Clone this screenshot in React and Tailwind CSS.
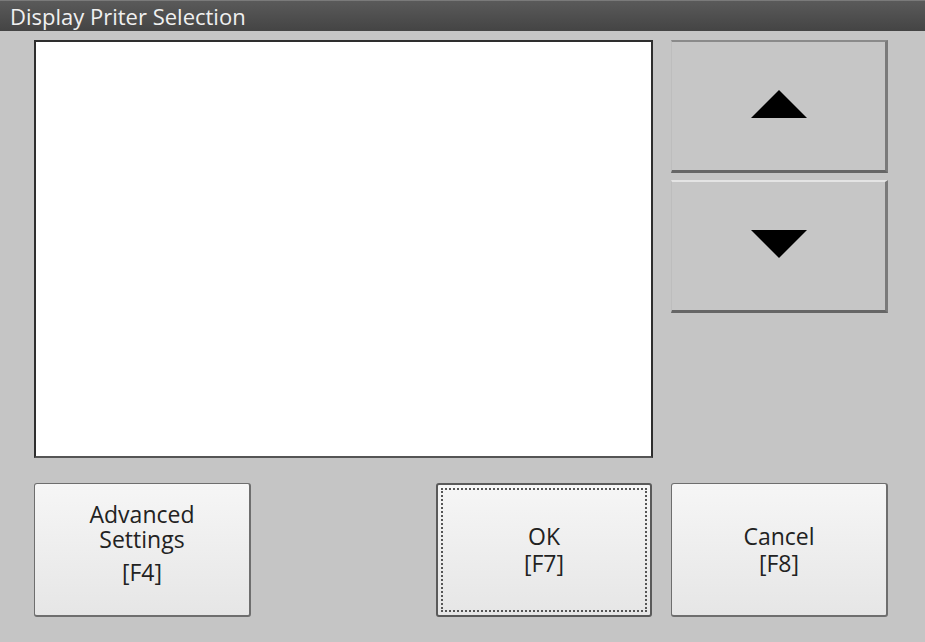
import React from "react";

const FONT = { fontFamily: '"Open Sans", "Noto Sans", sans-serif' };

function ScrollButton({ dir, topLine }) {
  return (
    <button
      className={`flex h-[133px] w-full items-center justify-center border-l border-l-[#bdbdbd] border-r-[3px] border-r-[#7a7a7a] border-b-[3px] border-b-[#666] border-t-2 bg-[#c6c6c6] ${topLine}`}
    >
      <svg width="56" height="28" viewBox="0 0 56 28" className="-translate-y-[2px]">
        {dir === "up" ? (
          <polygon points="28,0 56,28 0,28" fill="#000" />
        ) : (
          <polygon points="0,0 56,0 28,28" fill="#000" />
        )}
      </svg>
    </button>
  );
}

function FaceButton({ children, focused, className = "" }) {
  return (
    <button
      className={`relative flex h-[134px] items-center justify-center rounded-[3px] bg-gradient-to-b from-[#f6f6f6] to-[#e6e6e6] text-[23px] text-[#222] ${
        focused ? "border-2 border-[#5a5a5a]" : "border border-[#6e6e6e] border-b-2 border-r-2"
      } ${className}`}
    >
      {focused && (
        <span className="pointer-events-none absolute inset-[3px] border-2 border-dotted border-[#555]" />
      )}
      {children}
    </button>
  );
}

export default function App() {
  return (
    <div className="flex h-[642px] w-[925px] flex-col bg-[#c5c5c5]" style={FONT}>
      {/* title bar */}
      <div className="flex h-[31px] items-center border-t border-t-[#7a7a7a] bg-gradient-to-b from-[#5a5a5a] to-[#444] pl-[10px]">
        <span className="text-[22px] leading-none text-[#f0f0f0]">Display Priter Selection</span>
      </div>

      <div className="flex flex-col pl-[34px] pr-[37px] pt-[9px]">
        <div className="flex gap-[18px]">
          <div className="h-[418px] w-[619px] border-2 border-[#2e2e2e] border-b-[#555] bg-white" />
          <div className="flex w-[217px] flex-col gap-[7px]">
            <ScrollButton dir="up" topLine="border-t-[#8a8a8a]" />
            <ScrollButton dir="down" topLine="border-t-[#e4e4e4]" />
          </div>
        </div>

        <div className="mt-[25px] flex">
          <FaceButton className="w-[217px]">
            <div className="flex -translate-y-[6px] flex-col items-center text-center">
              <p className="whitespace-pre-line leading-[25px]">{"Advanced\nSettings"}</p>
              <p className="mt-[8px] leading-[25px]">[F4]</p>
            </div>
          </FaceButton>
          <FaceButton focused className="ml-auto w-[216px]">
            <p className="whitespace-pre-line text-center leading-[27px]">{"OK\n[F7]"}</p>
          </FaceButton>
          <FaceButton className="ml-[19px] w-[217px]">
            <p className="whitespace-pre-line text-center leading-[27px]">{"Cancel\n[F8]"}</p>
          </FaceButton>
        </div>
      </div>
    </div>
  );
}
